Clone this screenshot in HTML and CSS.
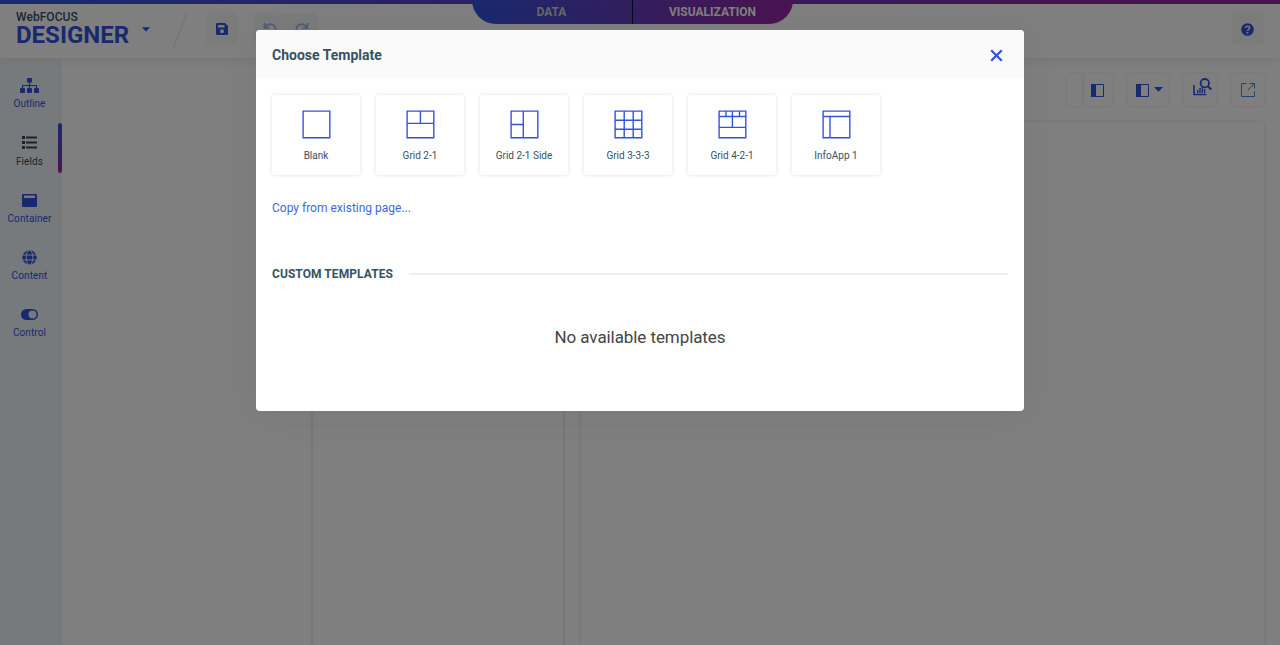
FILE: index.html
```html
<!DOCTYPE html>
<html lang="en">
<head>
<meta charset="utf-8">
<title>WebFOCUS Designer</title>
<link rel="stylesheet" href="styles.css">
</head>
<body>
<div class="app">
  <header class="header">
    <div class="brand"><span class="brand-top">WebFOCUS</span><span class="brand-name">DESIGNER</span></div>
    <svg class="brand-caret" width="8" height="5" viewBox="0 0 8 5"><path d="M0 .3h8L4 4.6z" fill="currentColor"/></svg>
    <svg class="slash" width="18" height="38" viewBox="0 0 18 38"><path d="M16 1L2 37" stroke="#efefef" stroke-width="2"/></svg>
    <div class="btn save"><svg width="12" height="12" viewBox="0 0 12 12"><path fill="currentColor" fill-rule="evenodd" d="M1.3 0H9l3 3v7.7c0 .7-.6 1.3-1.3 1.3H1.3C.6 12 0 11.400 0 10.700V1.300C0 .6.6 0 1.300 0zM2 2v2.500h6.500V2zM6 6.300a2 2 0 1 0 0 4 2 2 0 0 0 0-4z"/></svg></div>
    <div class="btn history">
      <svg width="14" height="14" viewBox="0 0 14 14" fill="none" stroke="currentColor" stroke-width="1.700"><path d="M1.500 1v5h5M2 5.500C4 2.500 7 1.500 9.500 2.600 12.500 4 13.500 7.500 11.800 10.300c-1.500 2.300-4.500 2.800-6.500 1.700"/></svg>
      <svg width="14" height="14" viewBox="0 0 14 14" fill="none" stroke="currentColor" stroke-width="1.700"><path d="M12.500 1v5h-5M12 5.500C10 2.500 7 1.500 4.500 2.600 1.500 4 .5 7.500 2.200 10.300c1.500 2.300 4.500 2.800 6.500 1.700"/></svg>
    </div>
    <div class="btn help"><svg width="13" height="13" viewBox="0 0 13 13"><circle cx="6.500" cy="6.500" r="6.300" fill="currentColor"/><path d="M4.500 5c.1-2.400 4.100-2.300 4.100-.1 0 1.400-2 1.500-2 2.900" fill="none" stroke="#f4f4f4" stroke-width="1.500"/><circle cx="6.500" cy="9.800" r=".95" fill="#f4f4f4"/></svg></div>
  </header>
  <div class="tabs"><span class="tab tab-data">DATA</span><span class="tab tab-vis">VISUALIZATION</span></div>
  <div class="body">
    <nav class="side">
      <div class="side-item outline"><span class="side-icon"><svg width="19" height="15" viewBox="0 0 19 15"><path d="M9.500 4v7M2.500 11V7.500h14V11" fill="none" stroke="currentColor" stroke-width="1.200"/><g fill="currentColor"><rect x="7" width="5" height="4.500" rx=".6"/><rect y="10" width="5" height="5" rx=".8"/><rect x="7" y="10" width="5" height="5" rx=".8"/><rect x="14" y="10" width="5" height="5" rx=".8"/></g></svg></span><span>Outline</span></div>
      <div class="side-item active"><span class="side-icon"><svg width="15" height="13" viewBox="0 0 15 13" fill="currentColor"><path d="M0 0h3v3H0zM0 5h3v3H0zM0 10h3v3H0zM4 .5h11v2H4zM4 5.500h11v2H4zM4 10.500h11v2H4z"/></svg></span><span>Fields</span></div>
      <div class="side-item"><span class="side-icon"><svg width="15" height="13" viewBox="0 0 15 13"><rect width="15" height="13" rx="1" fill="currentColor"/><path d="M2 1.500h11v2.500H2z" fill="#eaf3fa"/></svg></span><span>Container</span></div>
      <div class="side-item"><span class="side-icon"><svg width="15" height="15" viewBox="0 0 15 15"><circle cx="7.500" cy="7.500" r="7.200" fill="currentColor"/><g fill="none" stroke="#eaf3fa"><ellipse cx="7.500" cy="7.500" rx="3.300" ry="7.500"/><path d="M0 5h15M0 10h15"/></g></svg></span><span>Content</span></div>
      <div class="side-item control"><span class="side-icon"><svg width="17" height="11" viewBox="0 0 17 11"><rect width="17" height="11" rx="5.500" fill="currentColor"/><circle cx="11.500" cy="5.500" r="4" fill="#eaf3fa"/></svg></span><span>Control</span></div>
    </nav>
    <section class="pane"></section>
    <section class="pane"></section>
    <main class="work">
      <div class="tools">
        <div class="tool blank"></div>
        <div class="tool joined"><svg width="13" height="13" viewBox="0 0 13 13"><path d="M.5.5h12v12H.5z" fill="none" stroke="currentColor"/><path d="M0 0h5v13H0z" fill="currentColor"/></svg></div>
        <div class="tool split"><svg width="13" height="13" viewBox="0 0 13 13"><path d="M.5.5h12v12H.5z" fill="none" stroke="currentColor"/><path d="M0 0h5v13H0z" fill="currentColor"/></svg><svg class="split-caret" width="9" height="5" viewBox="0 0 9 5"><path d="M0 0h9L4.500 4.700z" fill="currentColor"/></svg></div>
        <div class="tool"><svg class="inspect" width="19" height="18" viewBox="0 0 19 18" fill="none" stroke="currentColor"><path d="M1 7v9.500h12.500" stroke-width="1.600"/><path d="M4.700 15v-3M7 15v-5M9.300 15V9M11.600 15v-4" stroke-width="1.400"/><circle cx="11.800" cy="5.200" r="4.200" stroke-width="1.800"/><path d="M14.800 8.200l3.500 3.300" stroke-width="2"/></svg></div>
        <div class="tool"><svg width="14" height="14" viewBox="0 0 14 14" fill="none" stroke="#4c86df"><path d="M5.500.5h-5v13h13v-5M8.500.5h5v5M13.500.5L7 7"/></svg></div>
      </div>
      <div class="canvas"></div>
    </main>
  </div>
</div>
<div class="overlay">
  <div class="dialog" role="dialog">
    <div class="dialog-head"><span class="dialog-title">Choose Template</span><svg width="13" height="13" viewBox="0 0 13 13"><path d="M1.200 1.200l10.600 10.600M11.800 1.200L1.200 11.800" stroke="#3153dc" stroke-width="2.300"/></svg></div>
    <div class="dialog-body">
      <div class="cards">
        <div class="card"><svg class="grid-icon" viewBox="0 0 29 29"><path d="M1.100 1.100h26.700v26.700H1.100z"/></svg><span>Blank</span></div>
        <div class="card"><svg class="grid-icon" viewBox="0 0 29 29"><path d="M1.100 1.100h26.700v26.700H1.100zM1 13.400h27M14.400 1v12"/></svg><span>Grid 2-1</span></div>
        <div class="card"><svg class="grid-icon" viewBox="0 0 29 29"><path d="M1.100 1.100h26.700v26.700H1.100zM13.300 1v27M1 14.500h12"/></svg><span>Grid 2-1 Side</span></div>
        <div class="card"><svg class="grid-icon" viewBox="0 0 29 29"><path d="M1.100 1.100h26.700v26.700H1.100zM10.200 1v27M19.200 1v27M1 10.200h27M1 19.200h27"/></svg><span>Grid 3-3-3</span></div>
        <div class="card"><svg class="grid-icon" viewBox="0 0 29 29"><path d="M1.100 1.100h26.700v26.700H1.100zM1 6.500h27M1 17.400h27M8 1v5.500M14.400 1v16.400M21.500 1v5.500"/></svg><span>Grid 4-2-1</span></div>
        <div class="card"><svg class="grid-icon" viewBox="0 0 29 29"><path d="M1.100 1.100h26.700v26.700H1.100zM1 6.500h27M8 6.500V28"/></svg><span>InfoApp 1</span></div>
      </div>
      <a class="copy">Copy from existing page...</a>
      <div class="section">CUSTOM TEMPLATES</div>
      <div class="empty">No available templates</div>
    </div>
  </div>
</div>
</body>
</html>
```
FILE: styles.css
```css
* { box-sizing: border-box; }
body { margin: 0; font-family: Roboto, "Liberation Sans", sans-serif; color: #37515f; overflow: hidden; }
svg { display: block; flex: none; }
.app { height: 645px; display: flex; flex-direction: column; background: #fff; color: #3253dc; }
.app::before { content: ""; position: relative; z-index: 2; height: 4px; flex: none; background: linear-gradient(90deg, #3253dc, #99259f); }
.header { position: relative; z-index: 1; height: 54px; flex: none; display: flex; align-items: flex-start; padding: 0 16px; background: #fff; box-shadow: 0 1px 12px #dfe5e8; }
.brand { display: flex; flex-direction: column; width: 114px; padding-top: 6px; }
.brand-top { font-size: 12px; line-height: 14px; font-weight: 500; color: #37515f; letter-spacing: .05px; }
.brand-name { font-size: 24px; line-height: 22px; font-weight: 700; white-space: nowrap; }
.brand-caret { margin: 23px 0 0 12px; }
.slash { margin: 8px 0 0 21px; }
.btn { height: 32px; border-radius: 4px; background: #f6f6f6; display: flex; align-items: center; justify-content: center; margin-top: 9px; }
.save { width: 32px; margin-left: 17px; }
.history { width: 64px; margin-left: 16px; gap: 18px; color: #a2b2ef; }
.help { width: 32px; margin-left: auto; padding-right: 1px; }
.tabs { position: absolute; z-index: 2; top: 0; left: 472px; width: 321px; height: 24px; display: flex; border-radius: 0 0 24px 24px; background: linear-gradient(100deg, #3253dc, #99259f); overflow: hidden; font-size: 12px; font-weight: 700; line-height: 24px; text-align: center; }
.tab { width: 160px; color: #fff; padding-right: 1px; }
.tab-data { width: 161px; border-right: 1px solid #001a35; color: #d0d0d0; }
.body { flex: 1; display: flex; min-height: 0; }
.side { width: 61px; border-right: 2px solid #efefef; background: #ecf5fb; padding-top: 7px; font-size: 10px; line-height: 12px; letter-spacing: .1px; flex: none; }
.side-item { height: 57.250px; width: 59px; display: flex; flex-direction: column; align-items: center; padding-top: 11px; position: relative; }
.side-icon { height: 20px; display: flex; align-items: center; margin-bottom: 2px; }
.outline .side-icon { height: 18px; margin-bottom: 4px; }
.control .side-icon { height: 18px; margin-bottom: 4px; }
.side-item.active { color: #37474f; }
.active .side-icon { height: 18px; margin-bottom: 5px; }
.active::after { content: ""; position: absolute; left: 58px; top: .75px; width: 4px; height: 50px; border-radius: 2px; background: linear-gradient(#3253dc, #99259f); }
.pane { width: 252px; border-right: 2px solid #eee; flex: none; }
.work { flex: 1; padding: 16px 16px 0 16px; display: flex; flex-direction: column; }
.tools { display: flex; justify-content: flex-end; height: 32px; flex: none; }
.tool { width: 32px; border-radius: 4px; box-shadow: 0 0 4px #e4e4e4; display: flex; align-items: center; justify-content: center; margin-left: 16px; }
.blank { width: 16px; }
.joined { width: 29px; margin-left: 0; }
.split { width: 40px; gap: 5px; padding-left: 3px; }
.split-caret { margin-top: -2px; }
.inspect { margin-top: -7px; margin-left: 4px; }
.canvas { flex: 1; margin-top: 16px; border-radius: 4px 4px 0 0; box-shadow: 0 0 4px #dedede; }
.overlay { position: absolute; inset: 0; z-index: 10; background: rgba(0,0,0,.5); display: flex; justify-content: center; align-items: flex-start; padding-top: 30px; }
.dialog { width: 768px; height: 381px; border-radius: 4px; background: #fff; overflow: hidden; box-shadow: 0 4px 32px rgba(55,71,79,.1); }
.dialog-head { height: 49px; background: #fafafa; padding: 1px 21px 0 16px; display: flex; align-items: center; justify-content: space-between; }
.dialog-title { font-size: 14px; line-height: 16px; font-weight: 700; }
.dialog-body { padding: 16px; display: flex; flex-direction: column; }
.cards { display: flex; gap: 16px; }
.card { width: 88px; height: 80px; border-radius: 3px; box-shadow: 0 0 4px #e0e0e0; display: flex; flex-direction: column; align-items: center; padding-top: 15px; font-size: 10px; line-height: 12px; }
.grid-icon { width: 29px; height: 29px; margin: 0 0 11px 1px; fill: none; stroke: #3253dc; stroke-width: 1.400; }
.copy { font-size: 12px; line-height: 16px; margin-top: 25px; color: #3d68e3; }
.section { display: flex; align-items: center; gap: 16px; font-size: 12px; line-height: 16px; font-weight: 700; margin-top: 50px; letter-spacing: .07px; }
.section::after { content: ""; height: 2px; flex: 1; background: #eee; }
.empty { text-align: center; font-size: 17px; line-height: 20px; margin-top: 45px; letter-spacing: -.08px; color: #444; }
```
